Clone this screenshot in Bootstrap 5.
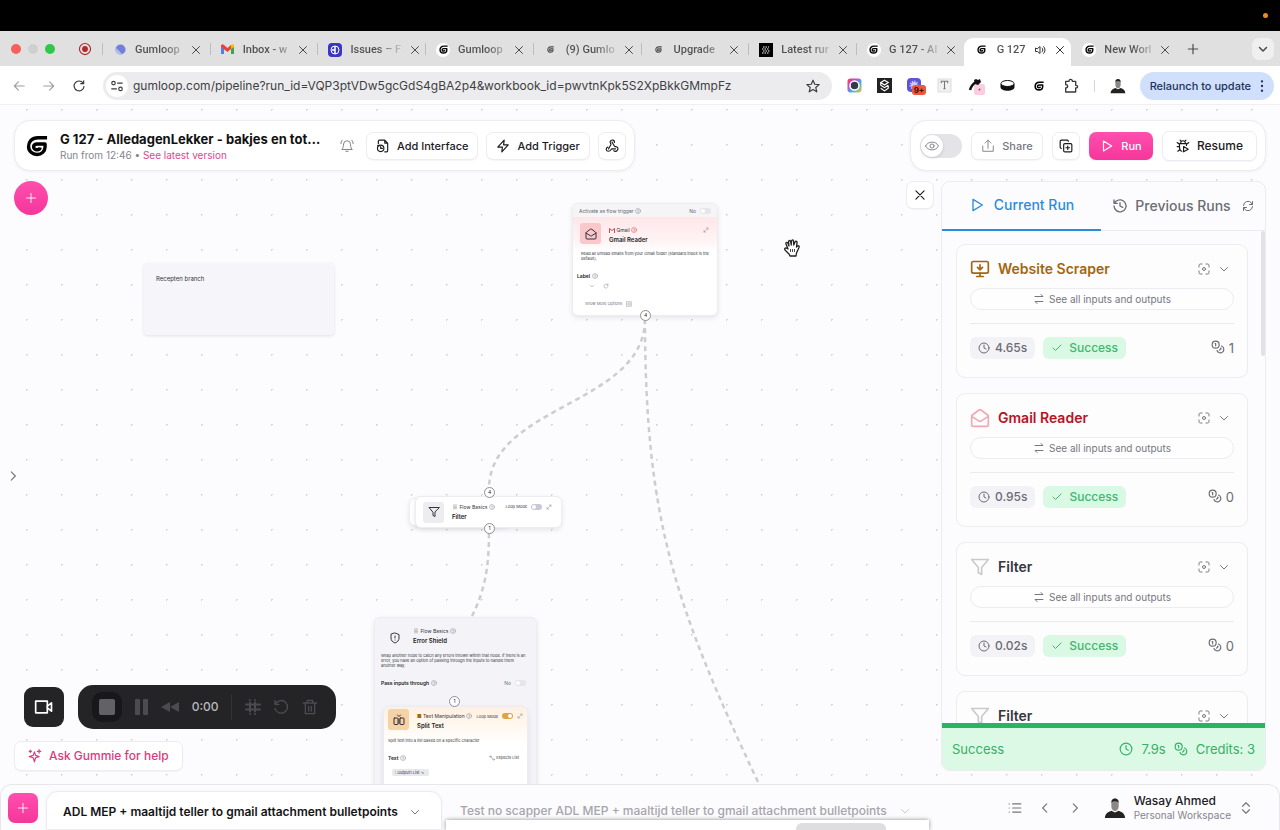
<!DOCTYPE html>
<html lang="en">
<head>
<meta charset="utf-8">
<meta name="viewport" content="width=device-width, initial-scale=1">
<title>G 127 - AlledagenLekker - Gumloop</title>
<link rel="stylesheet" href="https://cdn.jsdelivr.net/npm/bootstrap@5.3.0/dist/css/bootstrap.min.css">
<style>
body{font-family:Inter,"Liberation Sans",sans-serif;font-size:12px;line-height:16px;color:#1b1b1f;background:#fcfbfd}
button{font:inherit;color:inherit;background:none;border:0;padding:0;display:inline-flex;align-items:center;justify-content:center}
a{text-decoration:none}
.ic{width:16px;height:16px;fill:none;stroke:currentColor;stroke-width:2;stroke-linecap:round;stroke-linejoin:round;flex:none}
.ic-xs{width:6px;height:6px}.ic-s{width:12px;height:12px}.ic-m{width:14px;height:14px}.ic-l{width:20px;height:20px}
.thin{stroke-width:1.5}.bold{stroke-width:3}
.solid{fill:currentColor}
.c-red{color:#b62727}.c-amber{color:#a5650d}.c-rose{color:#f0a9ae}.c-crimson{color:#b8131f}.c-pale{color:#c9c9ce}.c-ink{color:#36363d}.c-gray{color:#77777e}.c-fade{color:#a0a0a4}
/* browser frame */
.menubar{height:31px;background:#000;padding-right:12px}
.recdot{width:5px;height:5px;border-radius:50%;background:#f08a1c}
.tabstrip{height:35px;background:#e0e0e0;color:#4a4a4c}
.lights{width:102px;padding-left:11px;gap:7px}
.light{width:10px;height:10px;border-radius:50%;background:#cfcfcf;flex:none}
.light.stop{background:#f9605a}.light.go{background:#2fc84a}
.tabs{min-width:0}
.btab{flex:1 1 0;min-width:0;padding:0 8px 5px 11px;gap:8px;position:relative;height:28px}
.btab::before{content:"";position:absolute;left:0;top:5px;height:12px;width:1px;background:#bdbdbf}
.btab.nosep::before{display:none}
.btab .ttl{flex:1;white-space:nowrap;font-family:Roboto,Inter,sans-serif;font-weight:500;font-size:11px;color:transparent;background:linear-gradient(90deg,#505053 28px,#c4c4c6 50px);-webkit-background-clip:text;background-clip:text}
.btab.on{background:#fff;border-radius:9px 9px 0 0;color:#333}
.fav{width:14px;height:14px;border-radius:50%;display:flex;align-items:center;justify-content:center;flex:none}
.tabend{width:101px;padding:0 6px 0 7px}
.chev{width:22px;height:22px;border-radius:7px;background:#efefef}
.navrow{height:39px;background:#fff;border-bottom:1px solid #f0f0f2;padding:1px 6px 0 12px;color:#3a3a3d}
.navbtns{width:91px;padding-right:17px}
.omni{height:28px;border-radius:14px;background:#ececee;padding:0 12px 0 3px;min-width:0}
.site{width:22px;height:22px;border-radius:50%;background:#fff}
.omni input{border:0;background:none;outline:0;min-width:0;font-size:12px;color:#3f3f43;padding:0 0 0 5px}
.exts{gap:15px;padding:0 14px 0 15px}
.extsep{width:1px;height:12px;background:#d5d5d8}
.badge9{left:5px;top:7px;background:#f0563a;border-radius:3px;font-size:8px;line-height:10px;padding:0 2px;font-weight:700;color:#401008}
.relaunch{height:28px;border-radius:14px;background:#d0dffb;color:#20345c;padding:0 5px 0 10px;gap:4px;font-size:11px;font-weight:500;white-space:nowrap}
/* canvas */
.stage{min-height:0;overflow:hidden;background-color:#fcfbfd;background-image:radial-gradient(circle,#d9d8dc 1px,transparent 1px);background-size:35px 35px;background-position:9px 22px}
.hud{padding:15px 14px 13px 6px;gap:10px;pointer-events:none}
.hud>*>*{pointer-events:auto}
.pill{background:#fff;border:1px solid #ececf1;border-radius:16px;box-shadow:0 1px 3px rgba(30,30,60,.06);height:51px}
.titlebar{padding:0 8px 0 11px}
.actions{width:356px;padding:0 8px 0 9px}
.obtn{height:28px;border:1px solid #ededf1;border-radius:7px;background:#fff;padding:0 9px;gap:7px;font-size:11px;font-weight:500;white-space:nowrap;box-shadow:0 1px 1px rgba(30,30,60,.04)}
.obtn.sq{width:28px;padding:0}
.obtn.big{height:30px;padding:0 13px;font-size:12px}
.flow-title{font-size:13px;line-height:18px;font-weight:700;color:#111;width:268px;white-space:nowrap}
.sub{font-size:10px;line-height:14px;color:#85858c}
.pink{color:#e0468f}
.obtn.pinkbg{border:0;padding:0 11px}
.pinkbg{background:linear-gradient(#ff4fae,#f5369a);color:#fff}
.round{width:34px;height:34px;border-radius:50%}
.switch{width:42px;height:24px;border-radius:12px;background:#e3e3e8;display:block}
.knob{width:22px;height:22px;border-radius:50%;background:#fff;margin:1px;box-shadow:0 1px 3px rgba(0,0,0,.15);color:#77777f}
.side{flex:1 1 0;min-height:0}
/* recorder */
.recrow{padding-left:10px;gap:14px;margin-bottom:12px}
.dark{background:#242427;color:#4b4b50}
.cam{width:40px;height:40px;border-radius:9px;color:#fff}
.rec{width:258px;height:44px;border-radius:15px;padding:0 18px 0 14px}
.rec .time{color:#b9b9bd;font-weight:500}
.rec .bar{width:1px;height:26px;background:#333337}
.stopper{width:30px;height:30px;border-radius:10px;background:#18181a}
.ask{height:30px;padding:0 13px;font-size:12px;font-weight:500;color:#dd3a80}
/* run panel */
.panelrow{gap:7px}
.runs{width:325px;border:1px solid #ebebf0;border-radius:9px;background:#fcfcfe;overflow:hidden}
.rtabs{height:49px;border-bottom:1px solid #ececf0;font-size:14px;line-height:20px;font-weight:500;color:#6c6c73}
.rtabs .cur{width:159px;height:49px;gap:9px;color:#2c8cdc;border-bottom:2px solid #2c8cdc}
.rtabs .prev{gap:7px}
.rlist{min-height:0;overflow:hidden;padding:13px 13px 0 14px;gap:15px}
.thumb{width:4px;height:125px;background:#e2e1e6;border-radius:2px;top:0;right:0}
.rcard{border:1px solid #ececf1;border-radius:9px;padding:14px 13px 0;height:134px;flex:none;background:#fdfdfe;margin-right:4px}
.rcard h2{font-size:14px;line-height:20px;font-weight:600;margin:0}
.all{height:22px;border:1px solid #ececf1;border-radius:11px;font-size:10px;color:#77777e;gap:4px;background:#fefefe;margin-top:9px}
.rule{border-top:1px solid #ebebef;margin:13px 0}
.tag{height:22px;border-radius:6px;background:#f3f3f7;color:#6b6b73;font-weight:500;padding:0 8px;gap:5px}
.tag.ok{background:#d9f9e4;color:#43b570;gap:6px}
.cost{font-size:13px;color:#6b6b73}
.total{border-top:5px solid #27b562;background:#dcf9e6;color:#35b066;height:47px;font-size:13px;padding:0 10px}
/* nodes on the canvas */
.node{position:absolute;font-size:5px;line-height:6px;color:#33333a}
.node .ic-xs{color:#8a8a92;vertical-align:top}
.node b,.node .nm{font-weight:600;color:#222}
.node .nm{font-size:6px;line-height:8px;margin-top:3px}
.node .rose{color:#d84a50}
.box{background:#fff;border:1px solid #ededf1;border-radius:6px;box-shadow:0 2px 5px rgba(40,40,60,.1)}
.tiny{font-size:4px;line-height:5px;margin:0}
.tile{width:21px;height:21px;border-radius:3px;flex:none}
.minisw{width:11px;height:6px;border-radius:3px;background:#e6e6ea;padding:1px}
.minisw.idle{background:#c9c9d6}.minisw.live{background:#dca548;justify-content:flex-end}
.minisw i{width:4px;height:4px;border-radius:50%;background:#fff}
.n-note{left:144px;top:158px;width:190px;height:72px;background:#f6f6fa;border-radius:3px;padding:13px 12px;box-shadow:0 1px 3px rgba(40,40,70,.12);font-size:6px}
.n-mail{left:572px;top:98px;width:146px;height:113px;overflow:hidden}
.n-mail .hd{height:13px;background:#f5f5f7;padding:0 6px;color:#66666c}
.n-mail .pk{background:linear-gradient(#ffe6e8,#fff6f7 80%,#fff);padding:6px 8px 0 7px;height:34px}
.n-mail .tile{background:#fac7cb}
.n-filter{left:415px;top:391px;width:147px;height:32px;padding:0 9px 0 7px}
.n-behind{left:409px;top:393px;width:100px;height:28px}
.n-filter .tile{background:#ededf0}
.n-shield{left:374px;top:512px;width:163px;height:200px;background:#f4f4f8;padding:10px 10px 0 6px}
.n-split{left:383px;top:601px;width:145px;height:100px;background:linear-gradient(#fff0df,#fff 36px);padding-top:2px}
.n-split .tile{background:#f5d3a6}
.n-split .chip{background:#e8e8ef;border-radius:2px;padding:1px 3px;width:37px}
.port{position:absolute;width:11px;height:11px;border:1px solid #8e8e95;border-radius:50%;background:#fff;font-size:5px;line-height:9px;text-align:center}
.p1{left:640px;top:205px}.p2{left:484px;top:382px}.p3{left:484px;top:418px}.p4{left:449px;top:591px}
.hand{position:absolute;left:784px;top:134px;width:16px;height:18px}
/* workbook bar */
.bookbar{height:46px;border:1px solid #e6e6eb;border-bottom:0;border-radius:12px 12px 0 0;background:#fcfbfd;padding:0 26px 0 7px;overflow:hidden}
.addb{width:30px;height:30px;border-radius:7px}
.btn-book{height:39px;width:396px;border:1px solid #ececf0;border-radius:12px 12px 0 0;background:#fff;padding:2px 20px 0 16px;font-weight:600;color:#141416;box-shadow:0 0 3px rgba(0,0,0,.05);white-space:nowrap}
.btn-book2{color:#a5a5ab;font-weight:500;padding:6px 0 0 18px;gap:12px;white-space:nowrap}
.pager{gap:16px;margin-right:22px}
.uname{color:#1b1b1f;font-weight:500;line-height:15px}
.peek{left:445px;bottom:0;width:483px;height:10px;background:#fff;box-shadow:0 0 4px rgba(0,0,0,.45);overflow:hidden}
.peek i{width:90px;height:12px;border-radius:8px;background:#dedee0;margin:3px 0 0 350px;display:block}
</style>
</head>
<body class="vh-100 d-flex flex-column overflow-hidden">
<svg width="0" height="0" class="position-absolute" aria-hidden="true">
<symbol id="x" viewBox="0 0 24 24"><path d="M5 5l14 14M19 5L5 19"/></symbol>
<symbol id="plus" viewBox="0 0 24 24"><path d="M12 4v16M4 12h16"/></symbol>
<symbol id="down" viewBox="0 0 24 24"><path d="M5 9l7 7 7-7"/></symbol>
<symbol id="left" viewBox="0 0 24 24"><path d="M15 5l-7 7 7 7"/></symbol>
<symbol id="right" viewBox="0 0 24 24"><path d="M9 5l7 7-7 7"/></symbol>
<symbol id="gum" viewBox="0 0 24 24"><path d="M23 3H13C6.500 3 2.800 7.200 2.800 12.500S7 21.300 12 21.300s8.800-3.500 8.800-8.300V9.800H12.500c-2.700 0-4.200 1.500-4.200 3.200 0 1.800 1.600 3.100 3.700 3.100 1.800 0 3.200-1 3.400-2.500" fill="none" stroke="currentColor" stroke-width="3.700" stroke-linejoin="round"/></symbol>
<symbol id="play" viewBox="0 0 24 24"><path d="M6 3.500l14 8.500-14 8.500z"/></symbol>
<symbol id="clock" viewBox="0 0 24 24"><circle cx="12" cy="12" r="10"/><path d="M12 6v6l4 2"/></symbol>
<symbol id="check" viewBox="0 0 24 24"><path d="M20 6L9 17l-5-5"/></symbol>
<symbol id="coins" viewBox="0 0 24 24"><circle cx="8" cy="8" r="6"/><path d="M18.100 10.400A6 6 0 1 1 10.300 18M7 6h1v4M16.700 13.900l.7.700-2.800 2.800"/></symbol>
<symbol id="swap" viewBox="0 0 24 24"><path d="M4 7h16l-4-4M20 17H4l4 4"/></symbol>
<symbol id="scan" viewBox="0 0 24 24"><path d="M2 8V5a3 3 0 0 1 3-3h3M16 2h3a3 3 0 0 1 3 3v3M22 16v3a3 3 0 0 1-3 3h-3M8 22H5a3 3 0 0 1-3-3v-3"/><circle cx="12" cy="12" r="3"/></symbol>
<symbol id="mail" viewBox="0 0 24 24"><path d="M21.200 8.400c.5.400.8 1 .8 1.600v10a2 2 0 0 1-2 2H4a2 2 0 0 1-2-2V10c0-.6.300-1.200.8-1.600l8-6a2 2 0 0 1 2.400 0zM22 10l-9 5.700a2 2 0 0 1-2 0L2 10"/></symbol>
<symbol id="funnel" viewBox="0 0 24 24"><path d="M22 3H2l8 9.500V19l4 2v-8.500z"/></symbol>
<symbol id="screen" viewBox="0 0 24 24"><path d="M12 13V7M15 10l-3 3-3-3M12 17v4M8 21h8"/><rect x="2" y="3" width="20" height="14" rx="2"/></symbol>
<symbol id="help" viewBox="0 0 24 24"><circle cx="12" cy="12" r="10"/><path d="M9 9a3 3 0 1 1 3 4v1M12 17v1"/></symbol>
<symbol id="stack" viewBox="0 0 24 24"><path d="M6 4h12M6 9h12M6 14h12M6 19h12"/></symbol>
<symbol id="hook" viewBox="0 0 24 24"><circle cx="5" cy="6" r="3"/><circle cx="19" cy="18" r="3"/><path d="M8 6c8 0 0 12 8 12"/></symbol>
<symbol id="expand" viewBox="0 0 24 24"><path d="M4 20L20 4M13 4h7v7M11 20H4v-7"/></symbol>
<symbol id="person" viewBox="0 0 24 24"><path d="M1 23c0-5 4-7 7-8l4 2 4-2c3 1 7 3 7 8z" fill="#222" stroke="none"/><path d="M8 6c0-6 8-6 8 0v4c0 7-8 7-8 0z" fill="#8d8784" stroke="none"/><path d="M8 6c0-6 8-6 8 0-2-2-6-2-8 0z" fill="#222" stroke="none"/></symbol>
</svg>

<div class="menubar d-flex align-items-center justify-content-end flex-shrink-0"><span class="recdot"></span></div>
<div class="tabstrip d-flex align-items-end flex-shrink-0">
  <div class="lights d-flex align-items-center align-self-center flex-shrink-0">
    <span class="light stop"></span><span class="light"></span><span class="light go"></span>
    <svg class="ic ic-m c-red ms-3" viewBox="0 0 24 24"><circle cx="12" cy="12" r="9.500"/><circle class="solid" cx="12" cy="12" r="4"/></svg>
  </div>
  <div class="tabs d-flex flex-grow-1" role="tablist">
    <div class="btab d-flex align-items-center"><span class="fav"><svg width="11" height="11" viewBox="0 0 12 12"><circle cx="6" cy="6" r="5.500" fill="#6f80d6"/><path d="M1 4a5.500 5.500 0 0 0 7 7.200z" fill="#b5bdeb"/></svg></span><span class="ttl">Gumloop</span><button aria-label="Close"><svg class="ic ic-s"><use href="#x"/></svg></button></div>
    <div class="btab d-flex align-items-center"><span class="fav"><svg width="13" height="11" viewBox="0 0 13 11"><path d="M0 1h3v9H0z" fill="#4285f4"/><path d="M10 1h3v9h-3z" fill="#34a853"/><path d="M0 1.500C1 0 2 0 3 1l3.500 3L10 1v4L6.500 8 0 3z" fill="#ea4335"/><path d="M10 1c1-1 3-1 3 1v1l-3 2z" fill="#fbbc04"/></svg></span><span class="ttl">Inbox - w</span><button aria-label="Close"><svg class="ic ic-s"><use href="#x"/></svg></button></div>
    <div class="btab d-flex align-items-center"><span class="fav rounded-1" style="background:#3a35c4"><svg width="10" height="10" viewBox="0 0 10 10" fill="none" stroke="#fff"><circle cx="5" cy="5" r="4"/><path d="M5 1v8M2 5h3" stroke-width="1.500"/></svg></span><span class="ttl">Issues – F</span><button aria-label="Close"><svg class="ic ic-s"><use href="#x"/></svg></button></div>
    <div class="btab d-flex align-items-center"><span class="fav bg-white text-black"><svg width="9" height="9"><use href="#gum"/></svg></span><span class="ttl">Gumloop</span><button aria-label="Close"><svg class="ic ic-s"><use href="#x"/></svg></button></div>
    <div class="btab d-flex align-items-center"><span class="fav"><svg width="7" height="7"><use href="#gum"/></svg></span><span class="ttl">(9) Gumlo</span><button aria-label="Close"><svg class="ic ic-s"><use href="#x"/></svg></button></div>
    <div class="btab d-flex align-items-center"><span class="fav"><svg width="7" height="7"><use href="#gum"/></svg></span><span class="ttl">Upgrade</span><button aria-label="Close"><svg class="ic ic-s"><use href="#x"/></svg></button></div>
    <div class="btab d-flex align-items-center"><span class="fav rounded-0 bg-black"><svg width="10" height="10" viewBox="0 0 10 10" stroke="#fff" stroke-dasharray="1.500 1"><path d="M2 2h6M1 4h7M2 6h7M1 8h7"/></svg></span><span class="ttl">Latest rur</span><button aria-label="Close"><svg class="ic ic-s"><use href="#x"/></svg></button></div>
    <div class="btab d-flex align-items-center"><span class="fav bg-white text-black"><svg width="9" height="9"><use href="#gum"/></svg></span><span class="ttl">G 127 - Al</span><button aria-label="Close"><svg class="ic ic-s"><use href="#x"/></svg></button></div>
    <div class="btab on nosep d-flex align-items-center"><span class="fav text-black"><svg width="9" height="9"><use href="#gum"/></svg></span><span class="ttl">G 127</span><svg class="ic ic-s" viewBox="0 0 24 24"><path d="M3 9v6h4l5 4V5L7 9zM16 8a5 5 0 0 1 0 8M19 5a9 9 0 0 1 0 14"/></svg><button aria-label="Close"><svg class="ic ic-s"><use href="#x"/></svg></button></div>
    <div class="btab nosep d-flex align-items-center"><span class="fav bg-white text-black"><svg width="9" height="9"><use href="#gum"/></svg></span><span class="ttl">New Worl</span><button aria-label="Close"><svg class="ic ic-s"><use href="#x"/></svg></button></div>
  </div>
  <div class="tabend d-flex justify-content-between align-items-center align-self-center flex-shrink-0"><button aria-label="New tab"><svg class="ic ic-m"><use href="#plus"/></svg></button><button class="chev" aria-label="Search tabs"><svg class="ic ic-s bold"><use href="#down"/></svg></button></div>
</div>
<div class="navrow d-flex align-items-center flex-shrink-0">
  <div class="navbtns d-flex justify-content-between flex-shrink-0">
    <button aria-label="Back" class="c-fade"><svg class="ic ic-m" viewBox="0 0 24 24"><path d="M21 12H4M11 5l-7 7 7 7"/></svg></button>
    <button aria-label="Forward" class="c-fade"><svg class="ic ic-m" viewBox="0 0 24 24"><path d="M3 12h17M13 5l7 7-7 7"/></svg></button>
    <button aria-label="Reload"><svg class="ic ic-m" viewBox="0 0 24 24"><path d="M19 7a8.500 8.500 0 1 0 1.500 6M20 3v5h-5"/></svg></button>
  </div>
  <div class="omni d-flex align-items-center flex-grow-1">
    <span class="site d-flex align-items-center justify-content-center flex-shrink-0"><svg class="ic ic-m" viewBox="0 0 24 24"><circle cx="6" cy="7" r="3"/><path d="M13 7h8M3 17h8"/><circle cx="18" cy="17" r="3"/></svg></span>
    <input class="flex-grow-1" aria-label="Address" value="gumloop.com/pipeline?run_id=VQP3ptVDw5gcGdS4gBA2p4&amp;workbook_id=pwvtnKpk5S2XpBkkGMmpFz">
    <button aria-label="Bookmark"><svg class="ic ic-m" viewBox="0 0 24 24"><path d="M12 2l3 7 7.500.6-5.700 5 1.700 7.400L12 18l-6.500 4 1.700-7.400-5.700-5L9 9z"/></svg></button>
  </div>
  <div class="exts d-flex align-items-center flex-shrink-0">
    <svg width="15" height="15" viewBox="0 0 15 15"><defs><linearGradient id="rb" x2="1" y2="1"><stop stop-color="#f0483e"/><stop offset=".3" stop-color="#d43fd0"/><stop offset=".6" stop-color="#3cb4e8"/><stop offset="1" stop-color="#f2c230"/></linearGradient></defs><rect x=".5" y=".5" width="14" height="14" rx="3" fill="url(#rb)"/><circle cx="7.500" cy="7.500" r="4.500" fill="#333a4a" stroke="#fff" stroke-width="1.500"/></svg>
    <svg width="15" height="15" viewBox="0 0 14 14" fill="none" stroke="#fff" stroke-width="1.100"><path d="M0 0h14v14H0z" fill="#222" stroke="none"/><path d="M7 2l3.500 2.200L7 6.500 3.500 4.200zM3.500 4.200v2.500L7 9l3.500-2.300M10.500 7v2.500L7 12 3.500 9.500"/></svg>
    <span class="position-relative d-flex"><svg width="15" height="15" viewBox="0 0 15 15"><rect width="14" height="14" rx="4" fill="#5d55d8"/><circle cx="7" cy="7" r="3" fill="#cfcaff" stroke="#cfcaff" stroke-dasharray="1 1" stroke-width="3"/></svg><span class="badge9 position-absolute">9+</span></span>
    <svg width="15" height="15" viewBox="0 0 14 14"><path d="M1 1h12v12H1z" fill="#f1f1f1" stroke="#ddd"/><path d="M4 5V3h6v2M7 3v7M6 10h2" fill="none" stroke="#777"/></svg>
    <svg width="18" height="18" viewBox="0 0 18 18"><rect x="7" y="7" width="11" height="11" rx="2" fill="#f9cfe0"/><path d="M3 13c1-4 3-6 6-8" stroke="#111" stroke-width="2.500" fill="none"/><path d="M7 3l2-1 2 1 2-1 1 3-3 3-3-1z" fill="#111"/><circle cx="12.500" cy="12.500" r="1" fill="#c33b78"/></svg>
    <svg width="15" height="15" viewBox="0 0 15 15"><path d="M.5 6v3c0 5 14 5 14 0V6z" fill="#111"/><ellipse cx="7.500" cy="5.500" rx="6.500" ry="3" fill="#fff" stroke="#111"/></svg>
    <svg width="10" height="10" class="text-black mx-1"><use href="#gum"/></svg>
    <svg class="ic" viewBox="0 0 24 24"><path d="M4 5h5c0-4 5-4 5 0h5v6c4 0 4 4 0 4v6H4v-6c4 0 4-5 0-5z"/></svg>
    <span class="extsep"></span>
    <svg width="16" height="16"><use href="#person"/></svg>
  </div>
  <button class="relaunch flex-shrink-0">Relaunch to update <svg class="ic ic-m solid" viewBox="0 0 24 24"><circle cx="12" cy="4" r="1"/><circle cx="12" cy="12" r="1"/><circle cx="12" cy="20" r="1"/></svg></button>
</div>

<main class="stage flex-grow-1 position-relative">
  <svg class="position-absolute top-0 start-0 w-100 h-100" fill="none" stroke="#cdcdd0" stroke-width="2.500" stroke-dasharray="5 4"><path d="M645 214C645 300 489 300 489 384M645 214C645 415 675 500 758 677M489 428C489 465 484 487 472 511"/></svg>
  <div class="node n-note">Recepten branch</div>
  <article class="node box n-mail">
    <div class="hd d-flex align-items-center justify-content-between"><span>Activate as flow trigger <svg class="ic ic-xs"><use href="#help"/></svg></span><span class="d-flex align-items-center gap-1">No <span class="minisw d-flex"><i></i></span></span></div>
    <div class="pk d-flex gap-2"><span class="tile d-flex align-items-center justify-content-center"><svg class="ic ic-s"><use href="#mail"/></svg></span><div class="flex-grow-1 pt-1"><div><svg width="6" height="5" viewBox="0 0 12 10" fill="none" stroke="#d84a50" stroke-width="2"><path d="M1 10V1l5 4 5-4v9"/></svg> Gmail <svg class="ic ic-xs rose"><use href="#help"/></svg></div><div class="nm">Gmail Reader</div></div><svg class="ic ic-xs mt-1"><use href="#expand"/></svg></div>
    <p class="tiny px-2">Read all unread emails from your Gmail folder (standard inbox is the default).</p>
    <div class="ps-1 mt-2 pt-1"><b>Label</b> <svg class="ic ic-xs"><use href="#help"/></svg></div>
    <div class="ps-3 mt-1 d-flex gap-2"><svg class="ic ic-xs"><use href="#down"/></svg><svg class="ic ic-xs" viewBox="0 0 24 24"><path d="M20 12a8 8 0 1 1-3-6M20 3v5h-5"/></svg></div>
    <div class="tiny ps-2 mt-2 pt-1 ms-1 text-secondary">Show More Options &nbsp; <svg class="ic ic-xs" viewBox="0 0 24 24"><rect x="3" y="3" width="18" height="18"/><path d="M7 9h10M7 15h10"/></svg></div>
  </article>
  <div class="node box n-behind"></div>
  <article class="node box n-filter d-flex align-items-center gap-2"><span class="tile d-flex align-items-center justify-content-center"><svg class="ic ic-s"><use href="#funnel"/></svg></span><div class="flex-grow-1"><div class="d-flex align-items-center"><span class="flex-grow-1"><svg class="ic ic-xs"><use href="#stack"/></svg> Flow Basics <svg class="ic ic-xs"><use href="#help"/></svg></span><span class="tiny me-1">Loop Mode</span><span class="minisw idle d-flex me-1"><i></i></span><svg class="ic ic-xs"><use href="#expand"/></svg></div><div class="nm">Filter</div></div></article>
  <article class="node box n-shield">
    <div class="d-flex gap-2 ps-1"><svg class="ic ic-s mt-1 ms-1 me-1" viewBox="0 0 24 24"><path d="M12 2l8 3v7c0 5-3 8-8 10-5-2-8-5-8-10V5zM12 8v4M12 16v.1"/></svg><div><div><svg class="ic ic-xs"><use href="#stack"/></svg> Flow Basics <svg class="ic ic-xs"><use href="#help"/></svg></div><div class="nm">Error Shield</div></div></div>
    <p class="tiny mt-2">Wrap another node to catch any errors thrown within that node. If there is an error, you have an option of passing through the inputs to handle them another way.</p>
    <div class="d-flex justify-content-between mt-2 pt-1"><span><b>Pass inputs through</b> <svg class="ic ic-xs"><use href="#help"/></svg></span><span class="d-flex gap-1 text-secondary">No <span class="minisw d-flex"><i></i></span></span></div>
  </article>
  <article class="node box n-split">
    <div class="d-flex gap-2 px-1"><span class="tile d-flex align-items-center justify-content-center"><svg class="ic ic-s" viewBox="0 0 24 24"><rect x="2" y="8" width="8" height="13" rx="1"/><rect x="14" y="8" width="8" height="13" rx="1"/><path d="M12 10v9M9 2l3 3 3-3"/></svg></span><div class="flex-grow-1 pt-1"><div class="d-flex align-items-center"><span class="flex-grow-1"><span class="c-amber">■</span> Text Manipulation <svg class="ic ic-xs"><use href="#help"/></svg></span><span class="tiny me-1">Loop Mode</span><span class="minisw live d-flex me-1"><i></i></span><svg class="ic ic-xs"><use href="#expand"/></svg></div><div class="nm">Split Text</div></div></div>
    <p class="tiny ps-1 mt-2">Split text into a list based on a specific character</p>
    <div class="d-flex justify-content-between ps-1 pe-2 mt-2 pt-1"><span><b>Text</b> <svg class="ic ic-xs"><use href="#help"/></svg></span><span class="tiny"><svg class="ic ic-xs"><use href="#hook"/></svg> Expects List</span></div>
    <div class="tiny chip mt-2 ms-2">⁝ Output1 List ∿</div>
  </article>
  <span class="port p1">4</span><span class="port p2">4</span><span class="port p3">1</span><span class="port p4">1</span>
  <svg class="hand" viewBox="0 0 16 18" fill="#fff" stroke="#222" stroke-width="1.300" stroke-linejoin="round"><path d="M4 10L2 5c-.5-2 1.500-2 2-.5L5 7 4.500 3c0-2 2-2 2.200 0L7.200 6 7.500 2c.3-1.500 2-1.500 2 0l.2 4L11 3c.8-1.400 2.300-.6 2 .8L12.500 8l1-1c1.200-.7 2 .3 1.500 1.500L12.500 14 12 17H6l-1-2-4-4c-1-1.500.5-2.500 1.700-1.700z"/><path d="M6.500 10v3M8.500 10v3M10.500 10v3" stroke-width=".8"/></svg>

  <div class="hud position-relative h-100 d-flex flex-column">
    <div class="d-flex justify-content-between align-items-start">
      <header class="pill titlebar d-flex align-items-center ms-2">
        <svg width="22" height="22" class="text-black me-2"><use href="#gum"/></svg>
        <div class="ms-1"><div class="flow-title">G 127 - AlledagenLekker - bakjes en tot…</div><div class="sub">Run from 12:46 • <a href="#" class="pink">See latest version</a></div></div>
        <button aria-label="Notifications" class="ms-2 me-2 px-1 text-secondary"><svg class="ic ic-m thin" viewBox="0 0 24 24"><path d="M6 9a6 6 0 0 1 12 0c0 6 2 8 3 9H3c1-1 3-3 3-9M10 21h4M4 2C2 4 1.500 6 1.500 8M20 2c2 2 2.500 4 2.500 6"/></svg></button>
        <button class="obtn me-2"><svg class="ic ic-m" viewBox="0 0 24 24"><path d="M4 8V4a2 2 0 0 1 2-2h9l5 5v13a2 2 0 0 1-2 2h-3M15 2v5h5"/><circle cx="8" cy="16" r="5.500"/><path d="M8 13v3h3M3 11l2 1"/></svg>Add Interface</button>
        <button class="obtn me-2"><svg class="ic ic-m" viewBox="0 0 24 24"><path d="M14 2L3 14h8l-1 8 11-12h-8z"/></svg>Add Trigger</button>
        <button class="obtn sq" aria-label="Webhook"><svg class="ic ic-m" viewBox="0 0 24 24"><path d="M18 17h-6c-2 0-2 4-6 4-5 0-5-6-1-7M6 17l4-7c1-2-2-3-1-6 2-4 8-2 7 2M12 5l4 7c1 2 4 0 6 3 1 5-4 8-7 5"/></svg></button>
      </header>
      <div class="pill actions d-flex align-items-center justify-content-between">
        <label class="switch"><input type="checkbox" class="visually-hidden" aria-label="Preview"><span class="knob d-flex align-items-center justify-content-center"><svg class="ic ic-m thin" viewBox="0 0 24 24"><path d="M1 12c4-9 18-9 22 0-4 9-18 9-22 0z"/><circle cx="12" cy="12" r="3.500"/></svg></span></label>
        <button class="obtn c-gray"><svg class="ic ic-m thin" viewBox="0 0 24 24"><path d="M3 12v9h18v-9M12 16V2M7 7l5-5 5 5"/></svg>Share</button>
        <button class="obtn sq" aria-label="Duplicate"><svg class="ic ic-m" viewBox="0 0 24 24"><rect x="8" y="8" width="14" height="14" rx="2"/><path d="M4 16c-1 0-2-1-2-2V4c0-1 1-2 2-2h10c1 0 2 1 2 2M15 12v6M12 15h6"/></svg></button>
        <button class="obtn pinkbg"><svg class="ic ic-m"><use href="#play"/></svg>Run</button>
        <button class="obtn big"><svg class="ic ic-m" viewBox="0 0 24 24"><path d="M8 7a4 4 0 0 1 8 0M7 2l2 2M17 2l-2 2M6 8h12v3M6 8v6c0 4 1 6 4 7M2 13h4M3 21l4-3M2 6l4 3M22 6l-4 3M13 13v9l8-4.500z"/></svg>Resume</button>
      </div>
    </div>
    <div class="side d-flex justify-content-between">
      <div class="d-flex flex-column">
        <div class="side ms-2"><button class="round pinkbg" aria-label="Add node"><svg class="ic ic-m thin"><use href="#plus"/></svg></button></div>
        <button class="align-self-start c-gray" aria-label="Open sidebar"><svg class="ic ic-m"><use href="#right"/></svg></button>
        <div class="side ms-2 d-flex flex-column justify-content-end">
          <div class="recrow d-flex align-items-center">
            <button class="cam dark text-white" aria-label="Camera"><svg class="ic ic-l" viewBox="0 0 24 24"><rect x="2" y="5" width="14" height="14"/><path d="M16 11l5-4v10l-5-4"/></svg></button>
            <div class="rec dark d-flex align-items-center justify-content-between">
              <button class="stopper" aria-label="Stop"><svg width="16" height="16"><rect width="16" height="16" rx="2" fill="#626266"/></svg></button>
              <button aria-label="Pause"><svg width="14" height="16" fill="currentColor"><rect width="5" height="16" rx="1"/><rect x="8" width="5" height="16" rx="1"/></svg></button>
              <button aria-label="Rewind"><svg width="18" height="12" fill="currentColor"><path d="M0 6l9-5v10zM9 6l9-5v10z"/></svg></button>
              <span class="time">0:00</span>
              <span class="bar"></span>
              <button aria-label="Blur"><svg width="16" height="16" viewBox="0 0 16 16" stroke="currentColor" stroke-width="2" stroke-linecap="round"><path d="M5 1v0M10 1v0M1 5.500h14M1 10.500h14M5 3.500v9M10 3.500v9M5 15v0M10 15v0"/></svg></button>
              <button aria-label="Restart"><svg class="ic" viewBox="0 0 24 24"><path d="M4 7a9.500 9.500 0 1 1-1 7M3 2v6h6"/></svg></button>
              <button aria-label="Delete"><svg class="ic" viewBox="0 0 24 24"><path d="M2 6h20M8 6V2h8v4M5 6v16h14V6M10 11v7M14 11v7"/></svg></button>
            </div>
          </div>
          <button class="obtn ask align-self-start"><svg class="ic ic-m" viewBox="0 0 24 24"><path d="M11 5l2 6 6 2-6 2-2 7-2-7-7-2 7-2zM4 2v4M2 4h4M19 1v6M16 4h6"/></svg>Ask Gummie for help</button>
        </div>
      </div>
      <div class="panelrow d-flex align-items-start">
        <button class="obtn sq" aria-label="Close panel"><svg class="ic ic-m"><use href="#x"/></svg></button>
        <section class="runs h-100 d-flex flex-column">
          <div class="rtabs d-flex align-items-center flex-shrink-0"><button class="cur"><svg class="ic"><use href="#play"/></svg>Current Run</button><button class="prev flex-grow-1"><svg class="ic" viewBox="0 0 24 24"><path d="M3 12a9 9 0 1 0 3-7L3 8M3 3v5h5M12 7v5l4 2"/></svg>Previous Runs<svg class="ic ic-s ms-1" viewBox="0 0 24 24"><path d="M3 11a9 9 0 0 1 16-5l2 3M21 3v6h-6M21 13a9 9 0 0 1-16 5l-2-3M3 21v-6h6"/></svg></button></div>
          <div class="flex-grow-1 position-relative d-flex flex-column rlist"><span class="thumb position-absolute"></span>
            <article class="rcard"><div class="d-flex align-items-center"><svg class="ic ic-l c-amber me-2"><use href="#screen"/></svg><h2 class="flex-grow-1 c-amber">Website Scraper</h2><svg class="ic ic-s c-gray me-2"><use href="#scan"/></svg><svg class="ic ic-s c-gray me-1"><use href="#down"/></svg></div><button class="all w-100"><svg class="ic ic-s"><use href="#swap"/></svg>See all inputs and outputs</button><div class="rule"></div><div class="d-flex gap-2 align-items-center"><span class="tag d-flex align-items-center"><svg class="ic ic-s"><use href="#clock"/></svg>4.65s</span><span class="tag ok d-flex align-items-center"><svg class="ic ic-s"><use href="#check"/></svg>Success</span><span class="cost ms-auto d-flex gap-1"><svg class="ic ic-m"><use href="#coins"/></svg>1</span></div></article>
            <article class="rcard"><div class="d-flex align-items-center"><svg class="ic ic-l c-rose me-2"><use href="#mail"/></svg><h2 class="flex-grow-1 c-crimson">Gmail Reader</h2><svg class="ic ic-s c-gray me-2"><use href="#scan"/></svg><svg class="ic ic-s c-gray me-1"><use href="#down"/></svg></div><button class="all w-100"><svg class="ic ic-s"><use href="#swap"/></svg>See all inputs and outputs</button><div class="rule"></div><div class="d-flex gap-2 align-items-center"><span class="tag d-flex align-items-center"><svg class="ic ic-s"><use href="#clock"/></svg>0.95s</span><span class="tag ok d-flex align-items-center"><svg class="ic ic-s"><use href="#check"/></svg>Success</span><span class="cost ms-auto d-flex gap-1"><svg class="ic ic-m"><use href="#coins"/></svg>0</span></div></article>
            <article class="rcard"><div class="d-flex align-items-center"><svg class="ic ic-l c-pale me-2"><use href="#funnel"/></svg><h2 class="flex-grow-1 c-ink">Filter</h2><svg class="ic ic-s c-gray me-2"><use href="#scan"/></svg><svg class="ic ic-s c-gray me-1"><use href="#down"/></svg></div><button class="all w-100"><svg class="ic ic-s"><use href="#swap"/></svg>See all inputs and outputs</button><div class="rule"></div><div class="d-flex gap-2 align-items-center"><span class="tag d-flex align-items-center"><svg class="ic ic-s"><use href="#clock"/></svg>0.02s</span><span class="tag ok d-flex align-items-center"><svg class="ic ic-s"><use href="#check"/></svg>Success</span><span class="cost ms-auto d-flex gap-1"><svg class="ic ic-m"><use href="#coins"/></svg>0</span></div></article>
            <article class="rcard"><div class="d-flex align-items-center"><svg class="ic ic-l c-pale me-2"><use href="#funnel"/></svg><h2 class="flex-grow-1 c-ink">Filter</h2><svg class="ic ic-s c-gray me-2"><use href="#scan"/></svg><svg class="ic ic-s c-gray me-1"><use href="#down"/></svg></div></article>
          </div>
          <div class="total d-flex align-items-center flex-shrink-0"><span class="flex-grow-1">Success</span><svg class="ic ic-m me-2"><use href="#clock"/></svg>7.9s<svg class="ic ic-m ms-2 me-2"><use href="#coins"/></svg>Credits: 3</div>
        </section>
      </div>
    </div>
  </div>
</main>

<footer class="bookbar d-flex align-items-center flex-shrink-0 position-relative">
  <button class="addb pinkbg me-2" aria-label="New workbook"><svg class="ic ic-m thin"><use href="#plus"/></svg></button>
  <button class="btn-book align-self-end justify-content-between">ADL MEP + maaltijd teller to gmail attachment bulletpoints<svg class="ic ic-s c-gray"><use href="#down"/></svg></button>
  <button class="btn-book2">Test no scapper ADL MEP + maaltijd teller to gmail attachment bulletpoints<svg class="ic ic-s c-pale"><use href="#down"/></svg></button>
  <div class="peek position-absolute"><i></i></div>
  <div class="ms-auto d-flex align-items-center c-gray">
    <div class="pager d-flex">
      <button aria-label="List"><svg class="ic ic-m" viewBox="0 0 24 24"><path d="M8 5h14M8 12h14M8 19h14M2 5h.1M2 12h.1M2 19h.1"/></svg></button>
      <button aria-label="Previous"><svg class="ic ic-m"><use href="#left"/></svg></button>
      <button aria-label="Next"><svg class="ic ic-m"><use href="#right"/></svg></button>
    </div>
    <svg width="22" height="24" class="me-2"><use href="#person"/></svg>
    <div><div class="uname">Wasay Ahmed</div><div class="sub">Personal Workspace</div></div>
    <svg class="ic ic-m ms-2" viewBox="0 0 24 24"><path d="M6 9l6-6 6 6M6 15l6 6 6-6"/></svg>
  </div>
</footer>
<script src="https://cdn.jsdelivr.net/npm/bootstrap@5.3.0/dist/js/bootstrap.bundle.min.js"></script>
</body>
</html>
